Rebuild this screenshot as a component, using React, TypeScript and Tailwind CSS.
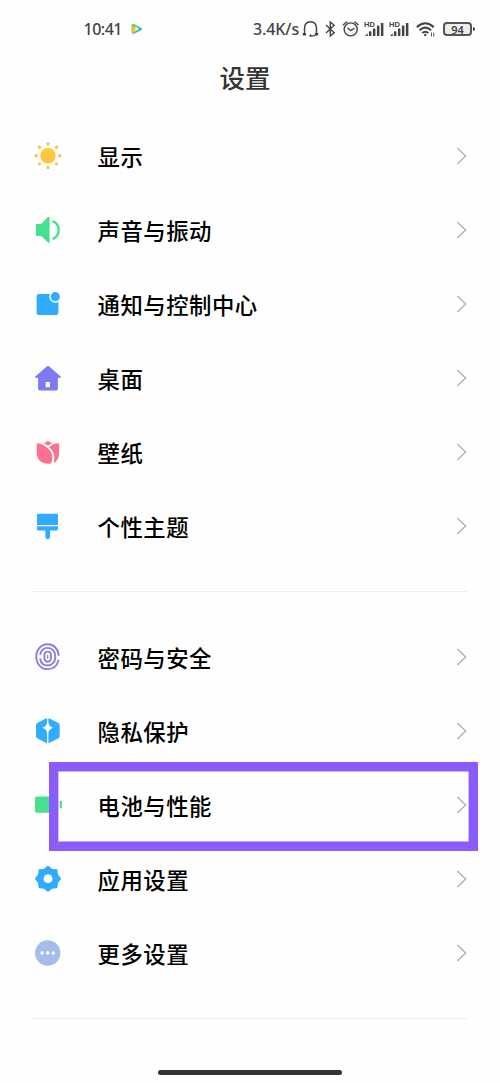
import type { ReactNode } from "react";

const Icon = ({ children }: { children: ReactNode }) => (
  <svg className="h-7 w-7 shrink-0" viewBox="0 0 28 28" fill="none">
    {children}
  </svg>
);

const Sun = () => (
  <Icon>
    <g fill="#ffc53d">
      <circle cx="14" cy="13.7" r="7.7" />
      <circle cx="14" cy="1.9" r="1.7" />
      <circle cx="22.4" cy="5.3" r="1.7" />
      <circle cx="25.8" cy="13.7" r="1.7" />
      <circle cx="22.4" cy="22.1" r="1.7" />
      <circle cx="14" cy="25.5" r="1.7" />
      <circle cx="5.6" cy="22.1" r="1.7" />
      <circle cx="2.2" cy="13.7" r="1.7" />
      <circle cx="5.6" cy="5.3" r="1.7" />
    </g>
  </Icon>
);

const Sound = () => (
  <Icon>
    <path d="M3 8h4.2L14 1.1q1.6-1 1.6.6v24.2q0 1.6-1.6.6L7.2 20H3q-1 0-1-1V9q0-1 1-1z" fill="#46e08f" />
    <path d="M19.4 5.4C26.4 8.8 26.4 19.200 19.4 22.6" stroke="#46e08f" strokeWidth="2.4" strokeLinecap="round" />
  </Icon>
);

const Notify = () => (
  <Icon>
    <rect x="2.6" y="4" width="21.8" height="21" rx="2.2" fill="#2fabff" />
    <circle cx="21.3" cy="6.7" r="6" fill="#fff" />
    <circle cx="21.3" cy="6.7" r="4.6" fill="#2fabff" />
  </Icon>
);

const Home = () => (
  <Icon>
    <path
      d="M13 2.2q1-.8 2 0l11.700 10.300q.9 1.200-.4 1.200h-2.400v10.800q0 1.900-1.900 1.900H6q-1.900 0-1.900-1.900V13.700H1.700q-1.300 0-.4-1.200z"
      fill="#7f79f2"
    />
    <rect x="11.700" y="18" width="4.300" height="5.300" rx=".5" fill="#fff" />
  </Icon>
);

const Tulip = () => (
  <Icon>
    <path d="M14 2.900 17.600 5.400 14 7.200 10.400 5.400z" fill="#ff6f91" stroke="#ff6f91" strokeWidth=".5" strokeLinejoin="round" />
    <path
      d="M2.700 5.300C7 5.400 10 7 12.600 9.400 18 13.300 19.600 18 17.200 25.600 8.500 26.700 2.700 22.600 2.700 14.300z"
      fill="#ff6f91"
    />
    <path d="M25.100 5.300c-4.200 0-7.300 1.500-10 3.900 5 4.200 6.200 9.400 4.500 15.700 3.600-1.600 5.500-5.200 5.500-10.400z" fill="#ff6f91" />
  </Icon>
);

const Brush = () => (
  <Icon>
    <path d="M4.200 1.700h18.600q1.200 0 1.200 1.200V13H3V2.900q0-1.200 1.200-1.200z" fill="#2fabff" />
    <path d="M3 14.300h21v2.600q0 1.700-1.700 1.700H16v6.200a2.350 2.350 0 0 1-4.700 0v-6.200H4.700Q3 18.600 3 16.900z" fill="#2fabff" />
  </Icon>
);

const Fingerprint = () => (
  <Icon>
    <g stroke="#8a80da" strokeWidth="1.9" strokeLinecap="round">
      <path d="M24.700 12C24 5.500 19.500 1.300 13.700 1.300 7 1.300 2.300 6.700 2.300 13.700S7 26.100 13.700 26.100c5.300 0 9.400-3.300 10.700-8.700" />
      <path d="M6.300 11.300C7.100 7.400 9.900 4.900 13.700 4.900c4.600 0 7.600 3.900 7.600 8.800s-3 8.800-7.600 8.800c-3.900 0-6.700-2.500-7.500-6.300" />
      <rect x="10.500" y="8.600" width="6.400" height="10.200" rx="3.200" />
      <path d="M13.700 12v3.400" strokeWidth="1.200" />
    </g>
  </Icon>
);

const Privacy = () => (
  <Icon>
    <path
      d="M12.400 1.300 3.600 5.700Q2 6.500 2 8.200v10.900q0 1.700 1.600 2.500l8.800 4.500q1.300.5 2.600 0l9-4.500q1.700-.8 1.700-2.500V8.200q0-1.700-1.700-2.500l-9-4.400q-1.300-.6-2.600 0z"
      fill="#2fabff"
    />
    <path
      d="M13.100 0h1.300v5.800q.8 3.900 4.800 4.900-4 1-4.800 4.900V28h-1.300V15.600q-.8-3.900-4.800-4.900 4-1 4.800-4.900z"
      fill="#fff"
    />
  </Icon>
);

const Battery = () => (
  <Icon>
    <rect x="1" y="5.400" width="23" height="16.300" rx="1.600" fill="#46e08f" />
    <rect x="25.700" y="9.700" width="2.200" height="7.600" rx=".6" fill="#46e08f" />
  </Icon>
);

const Gear = () => (
  <Icon>
    <path
      d="M14 1.700 17.700 4.700 22.500 5.200 23 10 26 13.700 23 17.400 22.500 22.200 17.700 22.700 14 25.700 10.300 22.700 5.500 22.200 5 17.400 2 13.700 5 10 5.500 5.200 10.300 4.700z"
      fill="#2fabff"
      stroke="#2fabff"
      strokeWidth="2"
      strokeLinejoin="round"
    />
    <circle cx="14" cy="13.700" r="4.400" fill="#fff" />
  </Icon>
);

const More = () => (
  <Icon>
    <circle cx="13.700" cy="14" r="12.700" fill="#a6bdea" />
    <g fill="#fff">
      <circle cx="8.100" cy="14" r="1.700" />
      <circle cx="13.700" cy="14" r="1.700" />
      <circle cx="19.300" cy="14" r="1.700" />
    </g>
  </Icon>
);

const Row = ({ icon, label, marked }: { icon: ReactNode; label: string; marked?: boolean }) => (
  <li className="relative flex h-[74px] items-center pr-[33px] pl-[34px]">
    {icon}
    <span className="ml-[35.5px] flex-1 pt-px text-[22.4px] leading-none font-medium tracking-[0.5px] text-black">
      {label}
    </span>
    <svg className="h-[18px] w-[11px]" viewBox="0 0 11 18" fill="none">
      <path d="M1.300 1 9.700 9 1.300 17" stroke="#b3b3b3" strokeWidth="1.400" />
    </svg>
    {marked && (
      <div className="absolute -top-[6px] left-[49px] h-[89px] w-[429.4px] shadow-[inset_0_0_0_9.4px_#8a5cfa]" />
    )}
  </li>
);

const Signal = () => (
  <svg className="h-[18px] w-[22px]" viewBox="0 0 22 18">
    <text x="0" y="6.500" fontSize="7.500" fontWeight="700" fill="#444" fontFamily="Liberation Sans, sans-serif">
      HD
    </text>
    <g fill="#444">
      <path d="M1 16 3.700 13.200V16z" />
      <rect x="4.900" y="11.300" width="2.500" height="4.700" rx=".6" />
      <rect x="8.900" y="8.500" width="2.500" height="7.500" rx=".6" />
      <rect x="12.900" y="5.500" width="2.500" height="10.500" rx=".6" />
      <rect x="16.900" y="3" width="2.500" height="13" rx=".6" />
    </g>
  </svg>
);

const StatusBar = () => (
  <header className="flex h-[58px] items-center pl-[83.5px] font-['Noto_Sans','Noto_Sans_CJK_SC',sans-serif] text-[16px] font-medium text-[#444]">
    <span className="w-[47.5px] tracking-[-0.5px]">10:41</span>
    <svg className="h-3 w-3" viewBox="0 0 12 12">
      <path d="M2.500.8 10.500 5q1.400 1 0 2L2.700 11.100Q.8 11.400.7 9.500V2.500Q.8.600 2.500.8z" fill="#2fb5c9" />
      <path d="M2 1.200 9 5 3 6.500.8 9.500V2.500z" fill="#8ccf4d" />
      <path d="M1 3.500 6.500 6 2.500 10.800Q.8 11 .7 9z" fill="#e6c629" />
      <path d="M4.500 3.800 8 6 4.500 8.200z" fill="#fff" />
    </svg>
    <span className="ml-[110px] w-[49px] tracking-[-0.1px]">3.4K/s</span>
    <svg className="h-[18px] w-[18px]" viewBox="0 0 18 18" fill="none" stroke="#444">
      <path d="M2.500 14V8.500C2.500 4 5 1.700 8.500 1.700s6 2.300 6 6.800V14" strokeWidth="1.500" />
      <path d="M.8 14.300h3.200M13 14.300h3.200" strokeWidth="2.600" />
      <path d="M9 15.800h2.300q1.700 0 2-1.500" strokeWidth="1.200" />
      <circle cx="8.500" cy="15.600" r=".8" fill="#444" />
    </svg>
    <svg className="ml-[5px] h-[18px] w-[11px]" viewBox="0 0 11 18" fill="none" stroke="#444" strokeWidth="1.400">
      <path d="M1 5 9.200 12.700 5.300 16V2L9.200 5.300 1 13" />
    </svg>
    <svg className="ml-[6px] h-[18px] w-[18px]" viewBox="0 0 18 18" fill="none" stroke="#444" strokeWidth="1.400">
      <circle cx="8.700" cy="9.400" r="6.500" />
      <path d="M5.900 8.200 8.700 10.700 12 8.500M1.300 4.700 4.700 2M12.800 2l3.400 2.700" strokeLinecap="round" />
    </svg>
    <div className="ml-[4px] flex gap-[3px]">
      <Signal />
      <Signal />
    </div>
    <svg className="ml-[5px] h-[18px] w-[20px]" viewBox="0 0 20 18" fill="none" stroke="#444" strokeWidth="2">
      <path d="M.8 7.200Q9.300-.6 17.800 7.200M3.500 10.200Q9.300 5 15.100 10.200M6.200 13Q9.300 10.500 12.400 13" />
      <circle cx="9.300" cy="15" r="1.200" fill="#444" stroke="none" />
      <path d="M15.500 12.500v4M17.700 12.500v4" strokeWidth=".9" />
    </svg>
    <div className="ml-[7px] flex h-[14px] w-[29px] items-center justify-center rounded-[4px] border-2 border-[#555] bg-[#eee] text-[11px] leading-none font-semibold">
      94
    </div>
    <div className="ml-px h-1 w-[2px] rounded-r bg-[#444]" />
  </header>
);

export default function App() {
  return (
    <main className="flex h-[1083px] w-[500px] flex-col overflow-hidden bg-[#fefefe] font-['Noto_Sans_CJK_SC',sans-serif]">
      <StatusBar />
      <h1 className="flex h-[38px] items-center justify-center pr-[10px] text-[25.500px] leading-none font-medium text-[#333]">
        设置
      </h1>
      <ul className="mt-[23px]">
        <Row icon={<Sun />} label="显示" />
        <Row icon={<Sound />} label="声音与振动" />
        <Row icon={<Notify />} label="通知与控制中心" />
        <Row icon={<Home />} label="桌面" />
        <Row icon={<Tulip />} label="壁纸" />
        <Row icon={<Brush />} label="个性主题" />
      </ul>
      <hr className="mt-[28px] mr-8 ml-8 border-[#eee]" />
      <ul className="mt-[28px]">
        <Row icon={<Fingerprint />} label="密码与安全" />
        <Row icon={<Privacy />} label="隐私保护" />
        <Row icon={<Battery />} label="电池与性能" marked />
        <Row icon={<Gear />} label="应用设置" />
        <Row icon={<More />} label="更多设置" />
      </ul>
      <hr className="mt-[28px] mr-8 ml-8 border-[#eee]" />
      <div className="mt-[51px] ml-[158px] h-[5px] w-[184px] rounded-full bg-[#333]" />
    </main>
  );
}
